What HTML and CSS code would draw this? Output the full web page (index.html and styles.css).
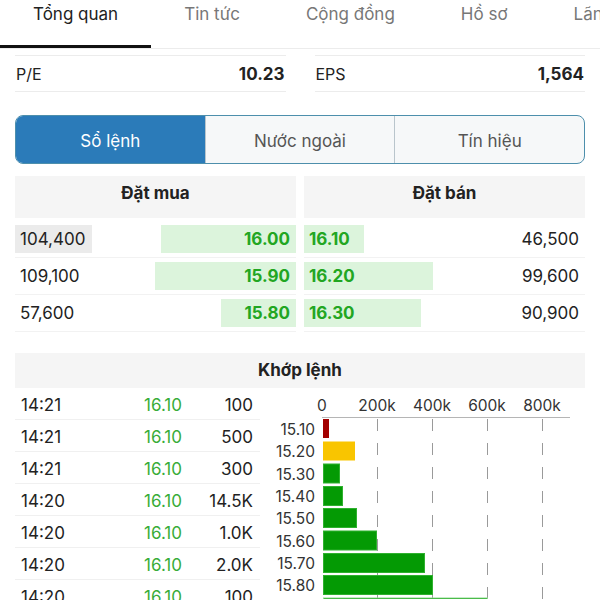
FILE: index.html
```html
<!doctype html>
<html lang="vi">
<head>
  <meta charset="utf-8">
  <title>Tổng quan</title>
  <link rel="stylesheet" href="styles.css">
</head>
<body>
  <nav class="tabs">
    <a class="tab active">Tổng quan</a>
    <a class="tab">Tin tức</a>
    <a class="tab">Cộng đồng</a>
    <a class="tab">Hồ sơ</a>
    <a class="tab">Lãnh đạo</a>
  </nav>

  <section class="stats">
    <div class="stat"><span>P/E</span><strong>10.23</strong></div>
    <div class="stat"><span>EPS</span><strong>1,564</strong></div>
  </section>

  <div class="segmented">
    <button class="seg active">Sổ lệnh</button>
    <button class="seg">Nước ngoài</button>
    <button class="seg">Tín hiệu</button>
  </div>

  <section class="book">
    <div class="side buy">
      <h3 class="head">Đặt mua</h3>
      <div class="row"><span class="qty top">104,400</span><span class="bar" style="width:135px">16.00</span></div>
      <div class="row"><span class="qty">109,100</span><span class="bar" style="width:141px">15.90</span></div>
      <div class="row"><span class="qty">57,600</span><span class="bar" style="width:75px">15.80</span></div>
    </div>
    <div class="side sell">
      <h3 class="head">Đặt bán</h3>
      <div class="row"><span class="bar" style="width:60px">16.10</span><span class="qty">46,500</span></div>
      <div class="row"><span class="bar" style="width:129px">16.20</span><span class="qty">99,600</span></div>
      <div class="row"><span class="bar" style="width:117px">16.30</span><span class="qty">90,900</span></div>
    </div>
  </section>

  <section class="matched">
    <h3 class="head">Khớp lệnh</h3>
    <div class="matched-body">
      <div class="trades">
        <div class="trade"><span>14:21</span><span class="price">16.10</span><span class="vol">100</span></div>
        <div class="trade"><span>14:21</span><span class="price">16.10</span><span class="vol">500</span></div>
        <div class="trade"><span>14:21</span><span class="price">16.10</span><span class="vol">300</span></div>
        <div class="trade"><span>14:20</span><span class="price">16.10</span><span class="vol">14.5K</span></div>
        <div class="trade"><span>14:20</span><span class="price">16.10</span><span class="vol">1.0K</span></div>
        <div class="trade"><span>14:20</span><span class="price">16.10</span><span class="vol">2.0K</span></div>
        <div class="trade"><span>14:20</span><span class="price">16.10</span><span class="vol">100</span></div>
      </div>
      <svg class="chart" width="325" height="213" viewBox="0 0 325 213">
        <g class="axis-labels" text-anchor="middle">
          <text x="62" y="25">0</text>
          <text x="117" y="25">200k</text>
          <text x="172" y="25">400k</text>
          <text x="227" y="25">600k</text>
          <text x="282" y="25">800k</text>
        </g>
        <line x1="62" y1="31.5" x2="310" y2="31.5" stroke="#b5b5b5"/>
        <g stroke="#9a9a9a" stroke-dasharray="12 12">
          <line x1="117.5" y1="33" x2="117.5" y2="213"/>
          <line x1="172.5" y1="33" x2="172.5" y2="213"/>
          <line x1="227.5" y1="33" x2="227.5" y2="213"/>
          <line x1="282.5" y1="33" x2="282.5" y2="213"/>
        </g>
        <g class="cats" text-anchor="end">
          <text x="55" y="49">15.10</text>
          <text x="55" y="71">15.20</text>
          <text x="55" y="94">15.30</text>
          <text x="55" y="116">15.40</text>
          <text x="55" y="138">15.50</text>
          <text x="55" y="161">15.60</text>
          <text x="55" y="183">15.70</text>
          <text x="55" y="205">15.80</text>
        </g>
        <rect x="63" y="33" width="6" height="19" fill="#a30000"/>
        <rect x="63" y="55.5" width="32" height="19" fill="#f9c500"/>
        <g fill="#049a04" stroke="#2fb12f" stroke-width="1">
          <rect x="63.5" y="78" width="16" height="19"/>
          <rect x="63.5" y="100.5" width="19" height="19"/>
          <rect x="63.5" y="122.5" width="33" height="19"/>
          <rect x="63.5" y="145" width="53" height="19"/>
          <rect x="63.5" y="167.5" width="101" height="19"/>
          <rect x="63.5" y="189.5" width="109" height="19"/>
          <rect x="63.5" y="212" width="164" height="19" stroke="#8fdb8f"/>
        </g>
      </svg>
    </div>
  </section>
</body>
</html>
```

FILE: styles.css
```css
:root {
  --text: #222;
  --muted: #777;
  --line: #ececec;
  --head-bg: #f5f5f5;
  --blue: #2b7bb9;
  --green: #22a622;
  --green-bg: #dcf4dc;
}
/* Page */
* { box-sizing: border-box; margin: 0; padding: 0; }
body {
  font-family: Inter, "Noto Sans", sans-serif;
  color: var(--text);
  background: #fff;
  width: 600px;
  height: 600px;
  overflow: hidden;
}
/* Tabs */
.tabs {
  display: flex;
  white-space: nowrap;
  overflow: hidden;
  border-bottom: 1px solid var(--line);
}
.tab {
  height: 48px;
  padding: 2px 33px 0;
  font-size: 17px;
  line-height: 24px;
  color: var(--muted);
  border-bottom: 3px solid transparent;
}
.tab.active {
  color: var(--text);
  border-bottom-color: #111;
}
/* P/E, EPS */
.stats {
  display: grid;
  grid-template-columns: 1fr 1fr;
  gap: 29px;
  padding: 0 15px;
  margin-top: 6px;
}
.stat {
  display: flex;
  justify-content: space-between;
  align-items: center;
  height: 37px;
  padding: 0 1px;
  border-top: 1px solid var(--line);
  border-bottom: 1px solid var(--line);
  font-size: 16px;
}
.stat strong {
  font-size: 17px;
  font-weight: 700;
}
/* Segmented control */
.segmented {
  display: flex;
  margin: 23px 15px 0;
  height: 49px;
  border: 1px solid #4d8fac;
  border-radius: 8px;
  overflow: hidden;
  background: #f6f8f9;
}
.seg {
  flex: 1;
  border: none;
  background: none;
  font-family: inherit;
  font-size: 17px;
  padding-top: 2px;
  color: #555;
}
.seg + .seg { border-left: 1px solid #b9c5cc; }
.seg.active {
  background: var(--blue);
  color: #fff;
}
/* Order book */
.book {
  display: grid;
  grid-template-columns: 1fr 1fr;
  gap: 8px;
  padding: 0 15px;
  margin-top: 12px;
}
.head {
  background: var(--head-bg);
  font-size: 17px;
  font-weight: 700;
  text-align: center;
}
.side .head {
  height: 42px;
  line-height: 35px;
  margin-bottom: 3px;
}
.row {
  display: flex;
  justify-content: space-between;
  align-items: center;
  height: 37px;
  border-bottom: 1px solid #f2f2f2;
  font-size: 17px;
}
.qty { padding: 0 6px 0 5px; }
.qty.top {
  background: #ebebeb;
  height: 28px;
  line-height: 28px;
  width: 77px;
}
.bar {
  height: 28px;
  line-height: 28px;
  background: var(--green-bg);
  color: var(--green);
  font-weight: 700;
}
.buy .bar { text-align: right; padding-right: 6px; }
.sell .bar { padding-left: 5px; }
/* Matched trades */
.matched {
  margin-top: 21px;
  padding-left: 15px;
}
.matched .head {
  margin-right: 15px;
  height: 35px;
  line-height: 35px;
}
.matched-body { display: flex; }
.trades { width: 245px; }
.trade {
  display: grid;
  grid-template-columns: 105px 74px 1fr;
  align-items: center;
  height: 32px;
  padding-top: 2px;
  border-bottom: 1px solid #f0f0f0;
  font-size: 17px;
  padding-left: 6px;
}
.trade .price {
  color: #38ac38;
  text-align: center;
}
.trade .vol {
  text-align: right;
  padding-right: 7px;
}
.chart {
  display: block;
  flex: none;
  margin-top: -2px;
}
.chart text {
  font-family: Inter, "Noto Sans", sans-serif;
  font-size: 15.5px;
  fill: #333;
}
```
